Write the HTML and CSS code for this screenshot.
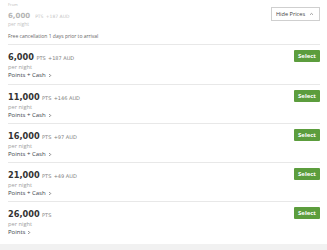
FILE: index.html
```html
<!DOCTYPE html>
<html>
<head>
<title>Room rates</title>
<meta name=viewport content="width=device-width, initial-scale=1">
<link rel="stylesheet" href="styles.css">
</head>
<body>

<div class=summary>
 <div class=summary-info>
  <div class=from>From</div>
  <div class=price><span class=pts>6,000</span><span class=unit>PTS</span><span class=cash>+187 AUD</span></div>
  <div class=night>per night</div>
  <div class=cancel>Free cancellation 1 days prior to arrival</div>
 </div>
 <button class=toggle type=button>Hide Prices
  <svg width="5" height="4" viewBox="0 0 5 4"><path d="M1 2.8 L2.5 1.4 L4 2.8" fill="none" stroke="#777" stroke-width="0.7"/></svg>
 </button>
</div>

<ul class=rates>
 <li class=rate>
  <div class=rate-info>
   <div class=price><span class=pts>6,000</span><span class=unit>PTS</span><span class=cash>+187 AUD</span></div>
   <div class=night>per night</div>
   <a class=kind href="#">Points + Cash <svg width="4" height="5" viewBox="0 0 4 5"><path d="M1.2 1 L2.7 2.5 L1.2 4" fill="none" stroke="#555" stroke-width="0.7"/></svg></a>
  </div>
  <button class=select type=button>Select</button>
 </li>
 <li class=rate>
  <div class=rate-info>
   <div class=price><span class=pts>11,000</span><span class=unit>PTS</span><span class=cash>+146 AUD</span></div>
   <div class=night>per night</div>
   <a class=kind href="#">Points + Cash <svg width="4" height="5" viewBox="0 0 4 5"><path d="M1.2 1 L2.7 2.5 L1.2 4" fill="none" stroke="#555" stroke-width="0.7"/></svg></a>
  </div>
  <button class=select type=button>Select</button>
 </li>
 <li class=rate>
  <div class=rate-info>
   <div class=price><span class=pts>16,000</span><span class=unit>PTS</span><span class=cash>+97 AUD</span></div>
   <div class=night>per night</div>
   <a class=kind href="#">Points + Cash <svg width="4" height="5" viewBox="0 0 4 5"><path d="M1.2 1 L2.7 2.5 L1.2 4" fill="none" stroke="#555" stroke-width="0.7"/></svg></a>
  </div>
  <button class=select type=button>Select</button>
 </li>
 <li class=rate>
  <div class=rate-info>
   <div class=price><span class=pts>21,000</span><span class=unit>PTS</span><span class=cash>+49 AUD</span></div>
   <div class=night>per night</div>
   <a class=kind href="#">Points + Cash <svg width="4" height="5" viewBox="0 0 4 5"><path d="M1.2 1 L2.7 2.5 L1.2 4" fill="none" stroke="#555" stroke-width="0.7"/></svg></a>
  </div>
  <button class=select type=button>Select</button>
 </li>
 <li class="rate last">
  <div class=rate-info>
   <div class=price><span class=pts>26,000</span><span class=unit>PTS</span></div>
   <div class=night>per night</div>
   <a class=kind href="#">Points <svg width="4" height="5" viewBox="0 0 4 5"><path d="M1.2 1 L2.7 2.5 L1.2 4" fill="none" stroke="#555" stroke-width="0.7"/></svg></a>
  </div>
  <button class=select type=button>Select</button>
 </li>
</ul>
<div class=footer></div>

</body>
</html>
```

FILE: styles.css
```css
html, body {
 margin:0;
 padding:0;
 background-color:white;
 font-family:"Open Sans",Arial,sans-serif;
 color:#333;
}
.summary {
 display:flex;
 justify-content:space-between;
 align-items:flex-start;
 margin:0 7px 0 8px;
 height:45px;
 border-bottom:1px solid #e8e8e8;
 box-sizing:border-box;
}
.summary-info {
 padding-top:2px;
}
.summary .from {
 font-size:4px;
 line-height:6px;
 color:#bbb;
}
.summary .price {
 line-height:9px;
}
.summary .pts {
 font-size:7px;
 color:#b4b4b4;
}
.summary .unit, .summary .cash {
 font-size:4.5px;
 color:#c4c4c4;
}
.summary .unit {
 margin-left:5px;
}
.summary .night {
 font-size:5px;
 line-height:7px;
 color:#c4c4c4;
}
.summary .cancel {
 margin-top:5px;
 font-size:5px;
 line-height:7px;
 color:#666;
}
.toggle {
 margin-top:7px;
 display:flex;
 align-items:center;
 gap:4px;
 height:14px;
 width:49px;
 padding:0 0 0 4px;
 border:1px solid #cfcfcf;
 background:white;
 color:#444;
 font-family:"Open Sans",Arial,sans-serif;
 font-size:5.6px;
}
.price {
 font-family:"DejaVu Sans",Verdana,sans-serif;
 white-space:nowrap;
}
.pts {
 font-weight:bold;
 font-size:8.2px;
 color:#333;
}
.unit, .cash {
 font-size:5px;
 color:#808080;
}
.unit {
 margin-left:2.5px;
}
.cash {
 margin-left:2.3px;
}
.rates {
 list-style:none;
 margin:0 7px 0 8px;
 padding:0;
}
.rate {
 display:flex;
 justify-content:space-between;
 align-items:flex-start;
 height:39px;
 box-sizing:border-box;
 padding-top:5px;
 border-top:1px solid #e8e8e8;
}
.rate:first-child {
 border-top:none;
}
.rate.last {
 height:43px;
}
.rate .price {
 line-height:10px;
}
.night {
 font-size:5.7px;
 line-height:8px;
 color:#a0a0a0;
}
.kind {
 display:flex;
 align-items:center;
 gap:2px;
 font-size:6px;
 line-height:9px;
 color:#3a3f4a;
 text-decoration:none;
}
.select {
 width:26px;
 height:12px;
 padding:0;
 border:none;
 border-radius:1px;
 background-color:#5c9d3d;
 color:white;
 font-family:"Open Sans",Arial,sans-serif;
 font-weight:bold;
 font-size:6px;
}
.footer {
 background-color:#f1f1f1;
 height:10px;
}
```
